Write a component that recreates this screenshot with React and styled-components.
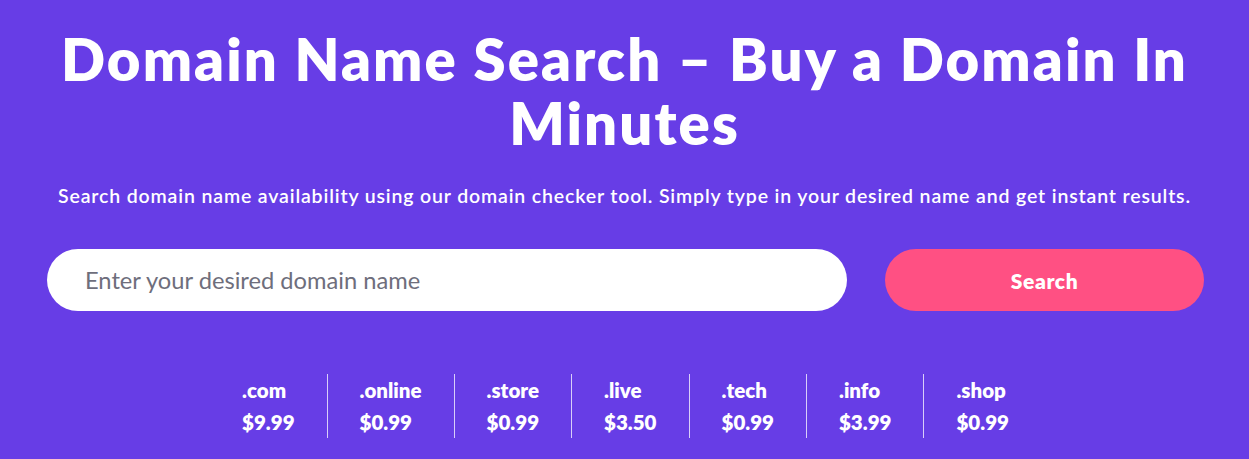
import React from "react";
import styled, { createGlobalStyle } from "styled-components";

const Global = createGlobalStyle`
  html, body { margin: 0; padding: 0; }
  body {
    background: #673de6;
    font-family: Lato, "Noto Sans", sans-serif;
    color: #fff;
  }
`;

const Hero = styled.section`
  background: #673de6;
  height: 459px;
  overflow: hidden;
  display: flex;
  flex-direction: column;
  align-items: center;
  padding-top: 27px;
  box-sizing: border-box;
`;

const Title = styled.h1`
  margin: 0;
  width: 1200px;
  text-align: center;
  font-size: 58px;
  line-height: 64px;
  font-weight: 800;
  letter-spacing: 2.1px;
`;

const Subtitle = styled.p`
  margin: 28px 0 0;
  font-size: 19.5px;
  line-height: 26px;
  font-weight: 600;
  letter-spacing: 0.85px;
  text-align: center;
  white-space: nowrap;
`;

const SearchRow = styled.form`
  margin: 40px 0 0 2px;
  display: flex;
  gap: 38px;
  width: 1157px;
`;

const Input = styled.input`
  flex: 0 0 800px;
  height: 62px;
  box-sizing: border-box;
  border: none;
  border-radius: 31px;
  background: #fff;
  padding: 0 38px;
  font-family: inherit;
  font-size: 23.7px;
  color: #2f1c6a;
  outline: none;
  &::placeholder { color: #6e6e7c; }
`;

const Button = styled.button`
  flex: 1;
  height: 62px;
  border: none;
  border-radius: 31px;
  background: #ff5083;
  color: #fff;
  font-family: inherit;
  font-weight: 800;
  font-size: 21px;
  letter-spacing: 0.6px;
  cursor: pointer;
`;

const Prices = styled.ul`
  list-style: none;
  margin: 63px 0 0 2px;
  padding: 0;
  display: flex;
`;

const Price = styled.li`
  padding: 0 32px;
  border-left: 1px solid rgba(255,255,255,0.75);
  font-size: 20.5px;
  font-weight: 800;
  line-height: 32px;
  &:first-child { border-left: none; }
`;

const tlds = [
  [".com", "$9.99"],
  [".online", "$0.99"],
  [".store", "$0.99"],
  [".live", "$3.50"],
  [".tech", "$0.99"],
  [".info", "$3.99"],
  [".shop", "$0.99"],
];

export default function App() {
  return (
    <>
      <Global />
      <Hero>
        <Title>Domain Name Search – Buy a Domain In Minutes</Title>
        <Subtitle>
          Search domain name availability using our domain checker tool. Simply type in your desired name and get instant results.
        </Subtitle>
        <SearchRow onSubmit={(e) => e.preventDefault()}>
          <Input placeholder="Enter your desired domain name" />
          <Button type="submit">Search</Button>
        </SearchRow>
        <Prices>
          {tlds.map(([t, p]) => (
            <Price key={t}>
              <div>{t}</div>
              <div>{p}</div>
            </Price>
          ))}
        </Prices>
      </Hero>
    </>
  );
}
